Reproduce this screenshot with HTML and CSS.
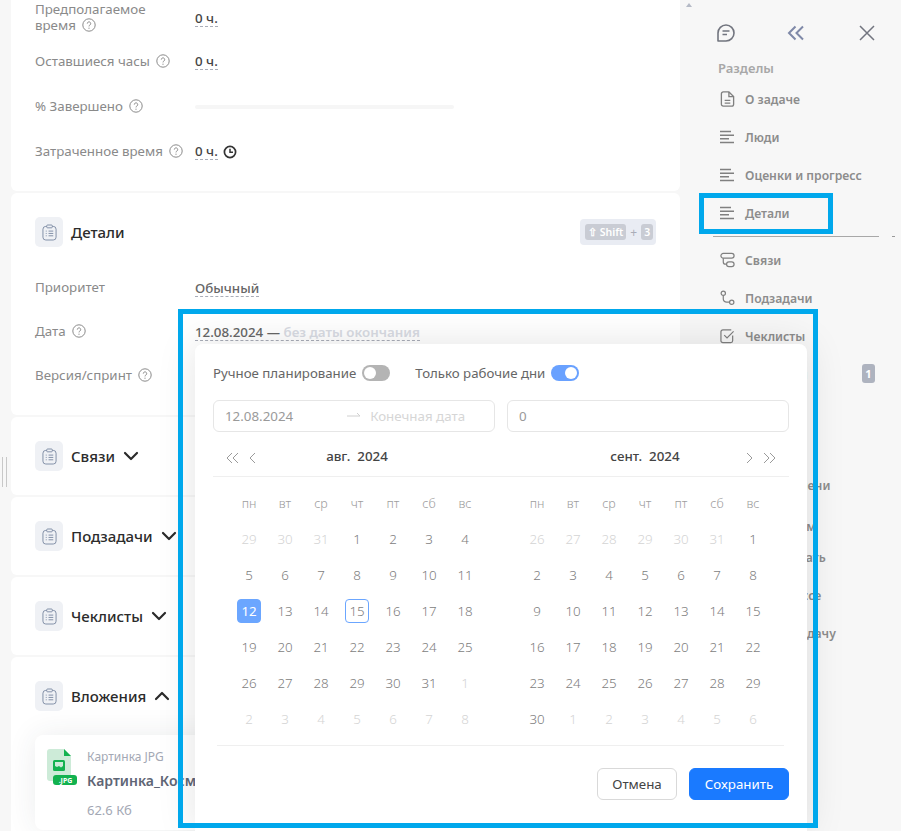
FILE: index.html
```html
<!DOCTYPE html>
<html>
<head>
<meta charset="utf-8">
<title>Задача</title>
<link rel="stylesheet" href="styles.css">
</head>
<body>
<svg class="sprite" width="0" height="0">
  <symbol id="help" viewBox="0 0 14 14"><circle cx="7" cy="7" r="6.2" fill="none" stroke="currentColor"/><path d="M5.3 5.6a1.7 1.7 0 1 1 2.6 1.4c-.6.4-.9.7-.9 1.4" fill="none" stroke="currentColor"/><circle cx="7" cy="10.2" r=".6" fill="currentColor"/></symbol>
  <symbol id="clipboard" viewBox="0 0 16 18"><rect x="1" y="2.5" width="14" height="14.5" rx="3" fill="none" stroke="currentColor"/><rect x="5" y="1" width="6" height="3" rx="1" fill="#eff1f5" stroke="currentColor"/><path d="M4 7.5h1M4 10h1M4 12.5h1M7 7.5h5M7 10h5M7 12.5h5" stroke="currentColor" fill="none"/></symbol>
  <symbol id="lines" viewBox="0 0 15 13"><path d="M0 1h11M0 4.700h14M0 8.300h9M0 12h14" stroke="currentColor" stroke-width="1.500" fill="none"/></symbol>
  <symbol id="chevron" viewBox="0 0 16 10"><path d="M2 2l6 6 6-6" stroke="currentColor" stroke-width="2.200" fill="none" stroke-linecap="round" stroke-linejoin="round"/></symbol>
</svg>

<div class="grip"></div>

<div class="app">
  <main class="main">
    <section class="card card-first">
      <div class="rows">
        <div class="row row-tall">
          <div class="label">Предполагаемое<br>время <svg class="help"><use href="#help"/></svg></div>
          <div class="value"><span class="dashed">0 ч.</span></div>
        </div>
        <div class="row">
          <div class="label">Оставшиеся часы <svg class="help"><use href="#help"/></svg></div>
          <div class="value"><span class="dashed">0 ч.</span></div>
        </div>
        <div class="row">
          <div class="label">% Завершено <svg class="help"><use href="#help"/></svg></div>
          <div class="value"><div class="progress"></div></div>
        </div>
        <div class="row">
          <div class="label">Затраченное время <svg class="help"><use href="#help"/></svg></div>
          <div class="value">
            <span class="dashed">0 ч.</span>
            <svg class="clock" viewBox="0 0 14 14"><circle cx="7" cy="7" r="5.600" fill="none" stroke="currentColor" stroke-width="1.700"/><path d="M7 3.800V7.300h3" fill="none" stroke="currentColor" stroke-width="1.500"/></svg>
          </div>
        </div>
      </div>
    </section>

    <section class="card">
      <div class="card-head">
        <span class="head-icon"><svg><use href="#clipboard"/></svg></span>
        <span class="head-title">Детали</span>
        <span class="hotkey"><span class="key">⇧ Shift</span> <span class="plus">+</span> <span class="key">3</span></span>
      </div>
      <div class="rows rows-details">
        <div class="row">
          <div class="label">Приоритет</div>
          <div class="value"><span class="dashed strong">Обычный</span></div>
        </div>
        <div class="row">
          <div class="label">Дата <svg class="help"><use href="#help"/></svg></div>
          <div class="value"><span class="dashed strong">12.08.2024 — <span class="no-end">без даты окончания</span></span></div>
        </div>
        <div class="row">
          <div class="label">Версия/спринт <svg class="help"><use href="#help"/></svg></div>
          <div class="value"></div>
        </div>
      </div>
    </section>

    <section class="card">
      <div class="card-head">
        <span class="head-icon"><svg><use href="#clipboard"/></svg></span>
        <span class="head-title">Связи</span>
        <svg class="chevron"><use href="#chevron"/></svg>
      </div>
    </section>

    <section class="card">
      <div class="card-head">
        <span class="head-icon"><svg><use href="#clipboard"/></svg></span>
        <span class="head-title">Подзадачи</span>
        <svg class="chevron"><use href="#chevron"/></svg>
      </div>
    </section>

    <section class="card">
      <div class="card-head">
        <span class="head-icon"><svg><use href="#clipboard"/></svg></span>
        <span class="head-title">Чеклисты</span>
        <svg class="chevron"><use href="#chevron"/></svg>
      </div>
    </section>

    <section class="card">
      <div class="card-head">
        <span class="head-icon"><svg><use href="#clipboard"/></svg></span>
        <span class="head-title">Вложения</span>
        <svg class="chevron chevron-up"><use href="#chevron"/></svg>
      </div>
      <div class="attach">
        <svg class="attach-icon" viewBox="0 0 30 38">
          <path d="M0 3a3 3 0 0 1 3-3h14l7 7v22a3 3 0 0 1-3 3H3a3 3 0 0 1-3-3z" fill="#cdebd8"/>
          <path d="M17 0l7 7h-7z" fill="#12b24f"/>
          <rect x="6" y="11" width="12" height="11" rx="1.500" fill="#12b24f"/>
          <path d="M8 13h8v4l-2 1.500-2-1.500-2 1-2-1z" fill="#cdebd8"/>
          <rect x="6" y="26" width="24" height="10" rx="3" fill="#12b24f"/>
          <text x="18.500" y="33.500" class="attach-ext">.JPG</text>
        </svg>
        <div class="attach-info">
          <div class="attach-type">Картинка JPG</div>
          <div class="attach-name">Картинка_Космос</div>
          <div class="attach-size">62.6 Кб</div>
        </div>
      </div>
    </section>
  </main>

  <aside class="side">
    <div class="side-top">
      <svg class="top-icon" viewBox="0 0 20 20"><path d="M2 18V10a8 8 0 1 1 8 8z" fill="none" stroke="currentColor" stroke-width="1.600" stroke-linejoin="round"/><path d="M6.500 8h7M6.500 11.500h4.500" stroke="currentColor" stroke-width="1.600" fill="none"/></svg>
      <svg class="top-icon top-collapse" viewBox="0 0 18 16"><path d="M8.500 1.500L2 8l6.500 6.500M16 1.500L9.500 8l6.500 6.500" stroke="currentColor" stroke-width="2" fill="none"/></svg>
      <svg class="top-icon top-close" viewBox="0 0 16 16"><path d="M1 1l14 14M15 1L1 15" stroke="currentColor" stroke-width="1.500" fill="none"/></svg>
    </div>
    <div class="side-title">Разделы</div>
    <nav class="side-list">
      <a class="side-item"><svg class="side-icon" viewBox="0 0 15 17"><path d="M1 3a2 2 0 0 1 2-2h6l5 5v8a2 2 0 0 1-2 2H3a2 2 0 0 1-2-2z" fill="none" stroke="currentColor" stroke-width="1.400"/><path d="M9 1v5h5M4.500 10h6M4.500 12.800h6" stroke="currentColor" stroke-width="1.400" fill="none"/></svg>О задаче</a>
      <a class="side-item"><svg class="side-icon"><use href="#lines"/></svg>Люди</a>
      <a class="side-item"><svg class="side-icon"><use href="#lines"/></svg>Оценки и прогресс</a>
      <a class="side-item"><svg class="side-icon"><use href="#lines"/></svg>Детали</a>
      <div class="side-divider"></div>
      <a class="side-item"><svg class="side-icon" viewBox="0 0 16 16"><rect x="1" y="1" width="14" height="5" rx="2.500" fill="none" stroke="currentColor" stroke-width="1.300"/><rect x="7" y="10" width="8" height="5" rx="2.500" fill="none" stroke="currentColor" stroke-width="1.300"/><path d="M3.500 6v4a2.500 2.500 0 0 0 2.500 2.500h1" fill="none" stroke="currentColor" stroke-width="1.300"/></svg>Связи</a>
      <a class="side-item"><svg class="side-icon" viewBox="0 0 16 16"><circle cx="3.500" cy="3" r="2.300" fill="none" stroke="currentColor" stroke-width="1.300"/><circle cx="12.500" cy="12.500" r="2.300" fill="none" stroke="currentColor" stroke-width="1.300"/><path d="M3.500 5.300V9a3.500 3.500 0 0 0 3.500 3.500h3.200" fill="none" stroke="currentColor" stroke-width="1.300"/></svg>Подзадачи</a>
      <a class="side-item"><svg class="side-icon" viewBox="0 0 16 16"><path d="M13.500 7.500V13a2 2 0 0 1-2 2H3a2 2 0 0 1-2-2V3.500a2 2 0 0 1 2-2h9" fill="none" stroke="currentColor" stroke-width="1.300"/><path d="M4.500 7l3 3L14.500 3" fill="none" stroke="currentColor" stroke-width="1.300"/></svg>Чеклисты</a>
      <a class="side-item">Вложения<span class="badge">1</span></a>
      <a class="side-item">История</a>
      <div class="side-title side-title-sub">Действия</div>
      <a class="side-item side-item-a">Учёт времени</a>
      <a class="side-item side-item-b">С проектом</a>
      <a class="side-item">Отслеживать</a>
      <a class="side-item">На процессе</a>
      <a class="side-item">Скрыть задачу</a>
    </nav>
    <div class="side-scroll-tick"></div>
    <div class="side-arrow"></div>
  </aside>
</div>

<div class="popup">
  <div class="popup-opts">
    <label class="opt">Ручное планирование <span class="toggle"></span></label>
    <label class="opt">Только рабочие дни <span class="toggle toggle-on"></span></label>
  </div>
  <div class="popup-inputs">
    <div class="input input-range">
      <span class="input-text">12.08.2024</span>
      <svg class="arrow" viewBox="0 0 14 8"><path d="M0 4h13M10 1l3 3" stroke="currentColor" fill="none"/></svg>
      <span class="input-ph">Конечная дата</span>
    </div>
    <div class="input"><span class="input-text">0</span></div>
  </div>
  <div class="cal-head">
    <div class="cal-panel-head">
      <span class="nav-btns">
        <svg class="nav nav-dbl" viewBox="0 0 14 12"><path d="M6 1L1 6l5 5M12 1L7 6l5 5" stroke="currentColor" fill="none"/></svg>
        <svg class="nav" viewBox="0 0 7 12"><path d="M6 1L1 6l5 5" stroke="currentColor" fill="none"/></svg>
      </span>
      <span class="cal-title">авг.&nbsp; 2024</span>
    </div>
    <div class="cal-panel-head">
      <span class="cal-title">сент.&nbsp; 2024</span>
      <span class="nav-btns nav-btns-right">
        <svg class="nav" viewBox="0 0 7 12"><path d="M1 1l5 5-5 5" stroke="currentColor" fill="none"/></svg>
        <svg class="nav nav-dbl" viewBox="0 0 14 12"><path d="M2 1l5 5-5 5M8 1l5 5-5 5" stroke="currentColor" fill="none"/></svg>
      </span>
    </div>
  </div>
  <div class="cals">
    <div class="cal" id="cal-aug"></div>
    <div class="cal" id="cal-sep"></div>
  </div>
  <div class="popup-foot">
    <button class="btn">Отмена</button>
    <button class="btn btn-primary">Сохранить</button>
  </div>
</div>

<div class="frame frame-popup"></div>
<div class="frame frame-item"></div>

<script>
  var days = ["пн", "вт", "ср", "чт", "пт", "сб", "вс"];

  function fillCal(id, prevLast, prevCount, count) {
    var c = document.getElementById(id);
    var html = "";
    days.forEach(function(d){ html += '<span class="wd">' + d + '</span>'; });
    for (var i = prevCount - 1; i >= 0; i--) {
      html += '<span class="day off">' + (prevLast - i) + '</span>';
    }
    for (var n = 1; n <= count; n++) {
      var cls = "day";
      if (id == "cal-aug" && n == 12) cls += " selected";
      if (id == "cal-aug" && n == 15) cls += " today";
      html += '<span class="' + cls + '"><i>' + n + '</i></span>';
    }
    var rest = 42 - prevCount - count;
    for (var r = 1; r <= rest; r++) {
      html += '<span class="day off">' + r + '</span>';
    }
    c.innerHTML = html;
  }

  fillCal("cal-aug", 31, 3, 31);
  fillCal("cal-sep", 31, 6, 30);
</script>
</body>
</html>
```

FILE: styles.css
```css
* { box-sizing: border-box; }
html, body { margin: 0; height: 100%; overflow: hidden; }
body {
  background: #f7f7f7;
  font-family: "Noto Sans", "Open Sans", sans-serif;
  font-size: 13.33px;
  color: #2b2b2b;
  position: relative;
}
.sprite { position: absolute; }

.app { display: flex; height: 831px; }

/* left column */
.main {
  width: 669px;
  margin-left: 11px;
  display: flex;
  flex-direction: column;
  gap: 2px;
  flex: none;
}
.card {
  background: #fff;
  border-radius: 6px;
  padding: 24px 24px;
}
.card-first { padding: 0 24px 22px; border-radius: 0 0 6px 6px; }

.rows { display: flex; flex-direction: column; gap: 11px; }
.rows-details { gap: 10px; margin: 24px 0 -2px; }
.rows-details .value { padding-top: 2px; }
.row { display: flex; align-items: center; min-height: 34px; }
.label {
  width: 160px;
  flex: none;
  color: #8a8a8a;
  line-height: 16px;
  padding-bottom: 2px;
}
.row-tall .label { padding-bottom: 0; }
.row-tall .value { padding-top: 4px; }
.help { width: 14px; height: 14px; color: #8a8a8a; vertical-align: -2px; margin-left: 3px; }
.value { display: flex; align-items: center; flex: 1; color: #444; }
.dashed { border-bottom: 1px dashed #a9adb8; line-height: 15px; font-weight: 500; }
.dashed.strong { color: #666; }
.no-end { color: #d8dbe3; font-weight: 600; }
.progress { width: 259px; height: 4px; background: #f6f6f6; border-radius: 2px; }
.clock { width: 14px; height: 14px; margin-left: 5px; color: #333; }

.card-head { display: flex; align-items: center; height: 30px; }
.head-icon {
  width: 28px;
  height: 30px;
  background: #eff1f5;
  border-radius: 5px;
  display: flex;
  align-items: center;
  justify-content: center;
  margin-right: 8px;
  color: #7d8ba3;
}
.head-icon svg { width: 15px; height: 17px; }
.head-title { font-size: 15px; font-weight: 500; color: #2b2b2b; }
.chevron { width: 16px; height: 10px; margin-left: 8px; color: #2b2b2b; }
.chevron-up { transform: rotate(180deg); }
.hotkey {
  margin-left: auto;
  background: #e9ecf3;
  color: #fff;
  font-size: 10.5px;
  font-weight: 600;
  border-radius: 4px;
  height: 26px;
  padding: 0 5px;
  width: 76px;
  display: flex;
  align-items: center;
  gap: 4px;
}
.key { background: #c9ccd4; border-radius: 3px; padding: 1px 3px; line-height: 14px; white-space: nowrap; }
.plus { color: #a9adb8; font-size: 12px; font-weight: 400; }

.attach {
  display: flex;
  margin-top: 24px;
  height: 95px;
  width: 300px;
  border-radius: 8px;
  background: #fff;
  box-shadow: 0 0 30px rgba(40, 50, 70, .09);
  padding: 14px 12px 0;
  gap: 10px;
}
.attach-icon { width: 30px; height: 38px; flex: none; }
.attach-ext { font: 700 7px "Noto Sans", sans-serif; fill: #fff; text-anchor: middle; }
.attach-info { margin-top: -1px; }
.attach-type { font-size: 12px; color: #a3a8b4; line-height: 18px; margin-bottom: 5px; }
.attach-name { font-size: 14px; font-weight: 600; color: #5f6675; line-height: 20px; white-space: nowrap; margin-bottom: 10px; }
.attach-size { font-size: 13px; color: #a3a8b4; line-height: 18px; }

/* right column */
.side { flex: 1; position: relative; padding: 0 22px 0 33px; }
.side-top {
  display: flex;
  align-items: center;
  height: 20px;
  margin: 23px 0 0 3px;
  color: #6f7280;
}
.top-icon { width: 20px; height: 20px; color: #72757f; flex: none; }
.top-collapse { width: 18px; height: 16px; margin-left: 51px; color: #7f89a8; }
.top-close { width: 16px; height: 16px; margin-left: 54px; }
.side-title {
  margin: 15px 0 0 5px;
  line-height: 20px;
  font-weight: 600;
  font-size: 13px;
  color: #a8a8a8;
}
.side-title-sub { margin: 0 0 0 5px; height: 31px; line-height: 28px; }
.side-list { display: flex; flex-direction: column; margin-top: 2px; }
.side-item {
  display: flex;
  align-items: center;
  height: 38px;
  padding-left: 32px;
  position: relative;
  font-size: 12.2px;
  font-weight: 600;
  color: #8c8c8c;
  white-space: nowrap;
}
.side-item-a { padding-top: 8px; }
.side-item-b { padding-top: 14px; }
.side-item .side-icon {
  position: absolute;
  left: 7px;
  top: 11px;
  width: 15px;
  height: 16px;
  color: #808080;
}
.side-divider { height: 1px; background: #a8a8a8; margin: 4px 0; }
.badge {
  position: absolute;
  left: 149px;
  top: 9px;
  width: 13px;
  height: 19px;
  background: #aeb3bf;
  color: #fff;
  border-radius: 3px;
  font-size: 11px;
  font-weight: 700;
  text-align: center;
  line-height: 19px;
}
.side-scroll-tick { position: absolute; left: 212px; top: 236px; width: 3px; height: 1px; background: #999; }
.side-arrow {
  position: absolute;
  left: 6px;
  top: 3px;
  border: 3px solid transparent;
  border-top: 0;
  border-bottom: 4px solid #b5bac6;
}

.grip {
  position: absolute;
  left: 2px;
  top: 457px;
  width: 5px;
  height: 30px;
  border-left: 1px solid #c8c8c8;
  border-right: 1px solid #c8c8c8;
}

/* date popup, sits over the page */
.popup {
  position: absolute;
  left: 195px;
  top: 344px;
  width: 612px;
  height: 487px;
  background: #fff;
  border-radius: 8px 8px 0 0;
  box-shadow: 0 0 40px rgba(0, 0, 0, .11);
  padding: 18px 18px 0;
}
.popup-opts { display: flex; gap: 25px; height: 22px; align-items: center; }
.opt { display: flex; align-items: center; gap: 6px; color: #666; font-size: 13.25px; }
.toggle {
  width: 28px;
  height: 16px;
  border-radius: 8px;
  background: #b4b4b4;
  position: relative;
  display: block;
}
.toggle::after {
  content: "";
  position: absolute;
  left: 2px;
  top: 2px;
  width: 12px;
  height: 12px;
  border-radius: 50%;
  background: #fff;
}
.toggle-on { background: #69a1ff; }
.toggle-on::after { left: 14px; }

.popup-inputs { display: flex; gap: 12px; margin-top: 16px; }
.input {
  flex: 1;
  height: 32px;
  border: 1px solid #e6e6e6;
  border-radius: 6px;
  display: flex;
  align-items: center;
  padding: 0 11px;
}
.input-text { color: #9a9a9a; }
.input-ph { color: #d6d6d6; }
.arrow { width: 14px; height: 8px; color: #d0d0d0; margin: 0 9px 0 54px; flex: none; }

.cal-head {
  display: flex;
  gap: 36px;
  height: 45px;
  padding: 4px 18px 0;
  width: 576px;
  border-bottom: 1px solid #efefef;
}
.cal-panel-head { width: 252px; position: relative; display: flex; align-items: center; justify-content: center; }
.cal-title { font-weight: 500; font-size: 13.33px; color: #444; }
.nav-btns { position: absolute; left: -5px; top: 16px; display: flex; align-items: center; gap: 9px; color: #9a9a9a; }
.nav-btns-right { left: auto; right: -5px; }
.nav { width: 7px; height: 12px; display: block; }
.nav-dbl { width: 14px; }

.cals { display: flex; gap: 36px; padding: 8px 18px 0; }
.cal { display: grid; grid-template-columns: repeat(7, 36px); grid-auto-rows: 36px; width: 252px; }
.wd, .day { display: flex; align-items: center; justify-content: center; }
.wd { color: #9d9d9d; font-size: 12.5px; font-weight: 300; }
.day { color: #7d7d7d; font-size: 13.33px; font-weight: 300; }
.day.off { color: #d4d4d4; }
.day i { font-style: normal; width: 24px; height: 24px; line-height: 22px; text-align: center; border-radius: 4px; border: 1px solid transparent; }
.selected i { background: #6ba6ff; border-color: #6ba6ff; color: #fff; font-weight: 400; }
.today i { border-color: #6ba6ff; }

.popup-foot {
  margin: 8px 5px 0 4px;
  border-top: 1px solid #efefef;
  padding: 22px 0 0;
  display: flex;
  justify-content: flex-end;
  gap: 12px;
  width: 567px;
}
.btn {
  height: 32px;
  width: 80px;
  border: 1px solid #d9d9d9;
  border-radius: 6px;
  background: #fff;
  font: inherit;
  color: #444;
  padding: 0;
}
.btn-primary { width: 100px; background: #1a7aff; border-color: #1a7aff; color: #fff; margin-right: -5px; }

/* blue annotation frames */
.frame { position: absolute; border: 5px solid #00a8ec; pointer-events: none; }
.frame-popup { left: 178px; top: 309px; width: 640px; height: 519px; }
.frame-item { left: 699px; top: 193px; width: 134px; height: 41px; }
```
